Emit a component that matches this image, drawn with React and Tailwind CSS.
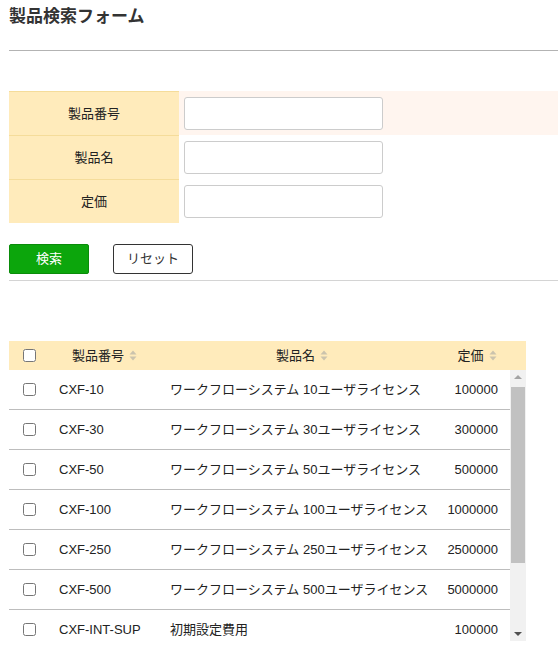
import React from "react";

const rows = [
  { code: "CXF-10", name: "ワークフローシステム 10ユーザライセンス", price: "100000" },
  { code: "CXF-30", name: "ワークフローシステム 30ユーザライセンス", price: "300000" },
  { code: "CXF-50", name: "ワークフローシステム 50ユーザライセンス", price: "500000" },
  { code: "CXF-100", name: "ワークフローシステム 100ユーザライセンス", price: "1000000" },
  { code: "CXF-250", name: "ワークフローシステム 250ユーザライセンス", price: "2500000" },
  { code: "CXF-500", name: "ワークフローシステム 500ユーザライセンス", price: "5000000" },
  { code: "CXF-INT-SUP", name: "初期設定費用", price: "100000" },
];

const fields = ["製品番号", "製品名", "定価"];

const SortIcon = () => (
  <svg width="8" height="11" viewBox="0 0 8 11" className="ml-[5px] inline-block">
    <path d="M4 0.5 L7.5 4.5 L0.5 4.5 Z" fill="#cbc3ad" />
    <path d="M4 10.5 L7.5 6.5 L0.5 6.5 Z" fill="#cbc3ad" />
  </svg>
);

const Check = () => (
  <input type="checkbox" className="m-0 w-[13px] h-[13px] accent-gray-600" />
);

const App = () => {
  return (
    <div
      className="pl-[9px] pt-[5px] pb-8 text-[13px] text-[#222] bg-white min-h-[672px]"
      style={{ fontFamily: '"Liberation Sans", "Noto Sans CJK JP", sans-serif' }}
    >
      <h1 className="text-[17px] font-bold text-[#333] leading-[24px]">製品検索フォーム</h1>
      <div className="mt-[21px] border-t border-[#b3b3b3]" />

      <div className="mt-[40px]">
        {fields.map((f, i) => (
          <div key={f} className={"flex h-[44px] " + (i === 0 ? "bg-[#fff5ef]" : "bg-white")}>
            <div
              className={
                "w-[170px] flex items-center justify-center bg-[#ffebbb] border-[#f5dc9a] " +
                (i === 0 ? "border-t" : "border-t")
              }
            >
              {f}
            </div>
            <div className="flex items-center pl-[5px]">
              <input
                type="text"
                className="w-[199px] h-[33px] border border-[#cccccc] rounded-[3px] bg-white outline-none"
              />
            </div>
          </div>
        ))}
      </div>

      <div className="flex gap-[24px] mt-[21px]">
        <button className="w-[80px] h-[30px] bg-[#0ca60c] border border-[#0a8c0a] rounded-[2px] text-white">
          検索
        </button>
        <button className="w-[80px] h-[30px] bg-white border border-[#333] rounded-[3px] text-[#333]">
          リセット
        </button>
      </div>
      <div className="mt-[6px] border-t border-[#d4d4d4]" />

      <div className="mt-[60px] w-[517px]">
        <div className="flex h-[29px] bg-[#ffebbb] items-center">
          <div className="w-[40px] flex justify-center">
            <Check />
          </div>
          <div className="w-[111px] flex items-center justify-center">
            製品番号
            <SortIcon />
          </div>
          <div className="w-[284px] flex items-center justify-center">
            製品名
            <SortIcon />
          </div>
          <div className="w-[66px] flex items-center justify-center">
            定価
            <SortIcon />
          </div>
        </div>

        <div className="flex h-[271px]">
          <div className="w-[501px] overflow-hidden">
            {rows.map((r) => (
              <div key={r.code} className="flex h-[40px] items-center border-b border-[#bdbdbd]">
                <div className="w-[40px] flex justify-center">
                  <Check />
                </div>
                <div className="w-[111px] pl-[10px]">{r.code}</div>
                <div className="w-[284px] pl-[10px] whitespace-nowrap">{r.name}</div>
                <div className="w-[66px] pr-[12px] text-right">{r.price}</div>
              </div>
            ))}
          </div>
          <div className="w-[16px] bg-[#f1f1f1] flex flex-col items-center">
            <svg width="16" height="17" viewBox="0 0 16 17">
              <path d="M8 5 L12 9 L4 9 Z" fill="#a3a3a3" />
            </svg>
            <div className="w-[14px] h-[176px] bg-[#c1c1c1]" />
            <div className="flex-1" />
            <svg width="16" height="17" viewBox="0 0 16 17">
              <path d="M8 12 L12 8 L4 8 Z" fill="#505050" />
            </svg>
          </div>
        </div>
      </div>
    </div>
  );
};

export default App;
